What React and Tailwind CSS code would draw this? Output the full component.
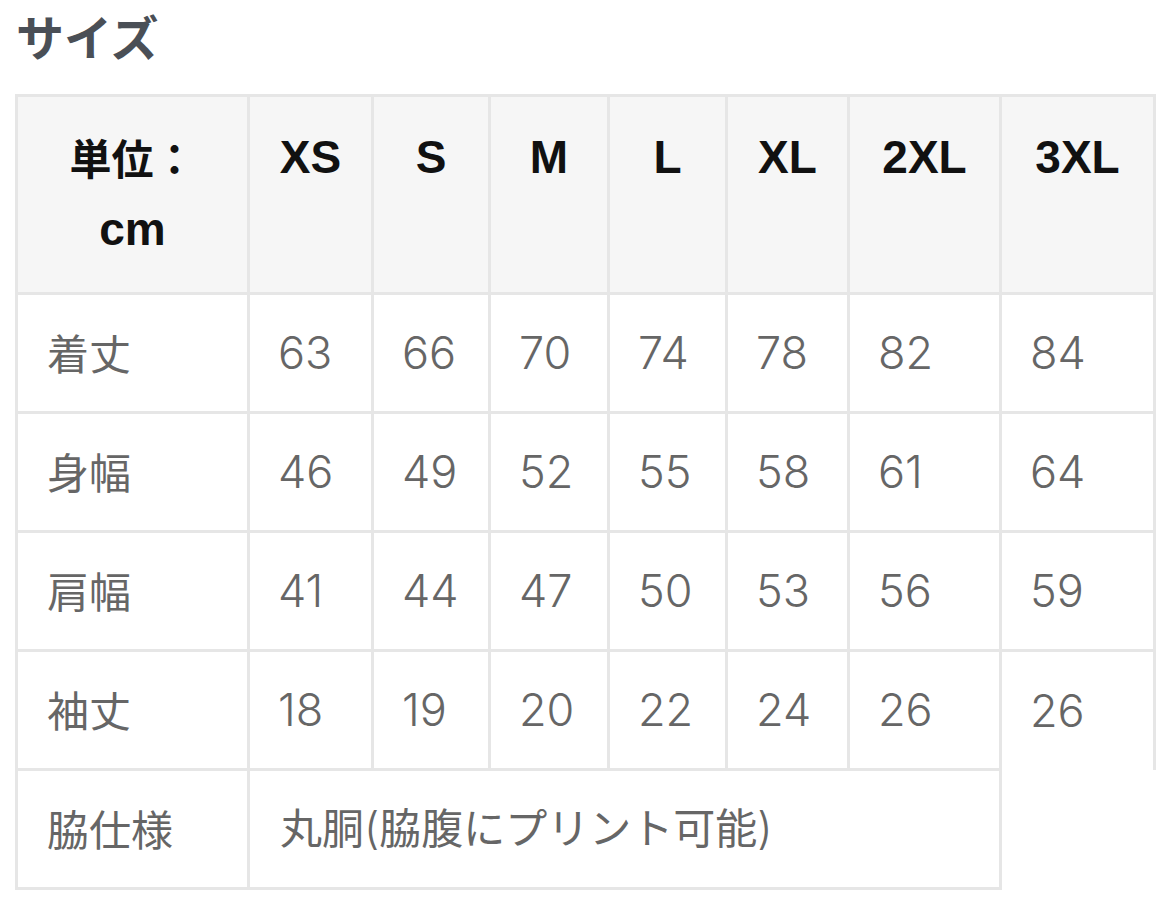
import React from "react";

const sizes = ["XS", "S", "M", "L", "XL", "2XL", "3XL"];
const rows = [
  ["着丈", ["63", "66", "70", "74", "78", "82", "84"]],
  ["身幅", ["46", "49", "52", "55", "58", "61", "64"]],
  ["肩幅", ["41", "44", "47", "50", "53", "56", "59"]],
  ["袖丈", ["18", "19", "20", "22", "24", "26", "26"]],
];

const colClasses = [
  "w-[232px]",
  "w-[124px]",
  "w-[117px]",
  "w-[119px]",
  "w-[118px]",
  "w-[122px]",
  "w-[152px]",
  "w-[154px]",
];

const thCls =
  "border-[3px] border-[#e6e6e6] bg-[#f6f6f6] align-top pt-[25px] text-[46px] leading-[70px] font-bold text-[#111] text-center";
const labelCls =
  "border-[3px] border-[#e6e6e6] align-middle pl-[29px] pb-[3px] text-[42px] text-[#666] font-['Noto_Sans_CJK_JP',sans-serif]";
const numCls =
  "border-[3px] border-[#e6e6e6] align-middle pl-[28px] text-[45px] font-light text-[#666] font-['Inter','Liberation_Sans',sans-serif]";
const numLastCls =
  "border-[3px] border-b-0 border-[#e6e6e6] align-middle pl-[28px] text-[45px] font-light text-[#666] font-['Inter','Liberation_Sans',sans-serif]";

export default function App() {
  return (
    <div className="bg-white w-[1170px] h-[918px] pl-[15px] overflow-hidden font-['Liberation_Sans','Noto_Sans_CJK_JP',sans-serif]">
      <h1 className="text-[48px] leading-[70px] font-bold text-[#4a4f56] pl-[1px] mb-[24px] font-['Noto_Sans_CJK_JP',sans-serif]">
        サイズ
      </h1>
      <table className="border-collapse table-fixed w-[1141px]">
        <colgroup>
          {colClasses.map((c, i) => (
            <col key={i} className={c} />
          ))}
        </colgroup>
        <thead>
          <tr className="h-[198px]">
            <th className={thCls}>
              <span className="text-[42px] font-['Noto_Sans_CJK_JP',sans-serif]">単位：</span>
              <br />
              cm
            </th>
            {sizes.map((s) => (
              <th key={s} className={thCls}>
                {s}
              </th>
            ))}
          </tr>
        </thead>
        <tbody>
          {rows.map(([label, vals], ri) => (
            <tr key={label} className="h-[119px]">
              <td className={labelCls}>{label}</td>
              {vals.map((v, i) => (
                <td
                  key={i}
                  className={ri === rows.length - 1 && i === vals.length - 1 ? numLastCls : numCls}
                >
                  {v}
                </td>
              ))}
            </tr>
          ))}
          <tr className="h-[119px]">
            <td className={labelCls}>脇仕様</td>
            <td
              colSpan={6}
              className="border-[3px] border-[#e6e6e6] align-middle pl-[30px] pb-[3px] text-[42px] text-[#666] whitespace-nowrap font-['Noto_Sans_CJK_JP',sans-serif]"
            >
              丸胴
              <span className="font-light text-[44px] font-['Inter','Liberation_Sans',sans-serif]">(</span>
              脇腹にプリント可能
              <span className="font-light text-[44px] font-['Inter','Liberation_Sans',sans-serif]">)</span>
            </td>
          </tr>
        </tbody>
      </table>
    </div>
  );
}
